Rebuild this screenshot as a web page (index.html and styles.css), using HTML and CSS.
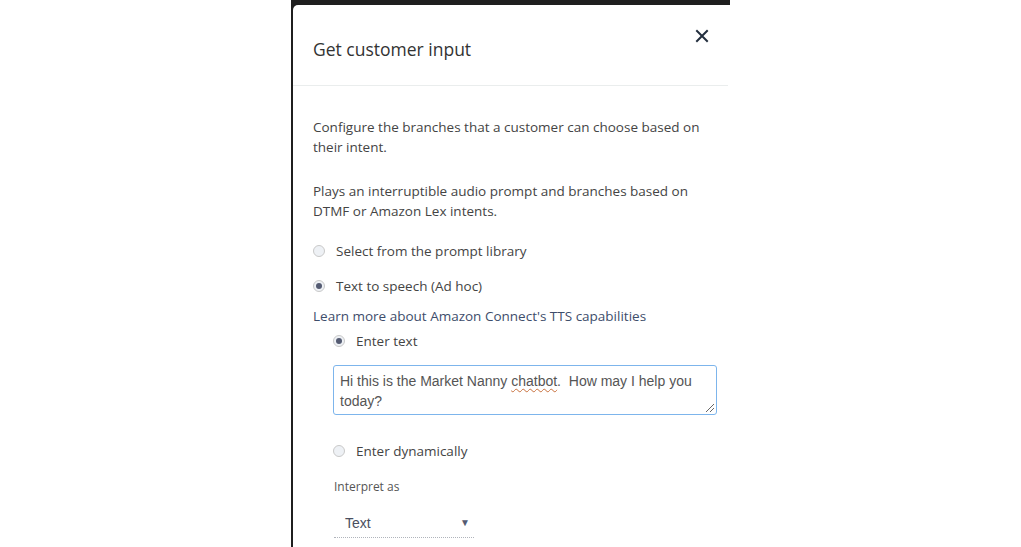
FILE: index.html
```html
<!DOCTYPE html>
<html>
<head>
<meta charset="utf-8">
<link rel="stylesheet" href="styles.css">
</head>
<body>
<div class="stage">
  <div class="frame">
    <div class="panel">
      <header class="head">
        <h1 class="title">Get customer input</h1>
        <button class="close" aria-label="Close">
          <svg width="14" height="14" viewBox="0 0 14 14"><path d="M2 2 L12 12 M12 2 L2 12" stroke="#232f3e" stroke-width="2" stroke-linecap="square"/></svg>
        </button>
      </header>
      <div class="body">
        <p class="para">Configure the branches that a customer can choose based on their intent.</p>
        <p class="para last">Plays an interruptible audio prompt and branches based on DTMF or Amazon Lex intents.</p>
        <label class="radio-row"><span class="radio"></span><span>Select from the prompt library</span></label>
        <label class="radio-row"><span class="radio on"></span><span>Text to speech (Ad hoc)</span></label>
        <a class="link">Learn more about Amazon Connect's TTS capabilities</a>
        <div class="sub">
          <label class="radio-row tight"><span class="radio on"></span><span>Enter text</span></label>
          <div class="textarea">Hi this is the Market Nanny <span class="spell">chatbot</span>.&nbsp; How may I help you today?<span class="grip"></span></div>
          <label class="radio-row dyn"><span class="radio"></span><span>Enter dynamically</span></label>
          <div class="small-label">Interpret as</div>
          <div class="select"><span>Text</span><span class="caret">▼</span></div>
        </div>
      </div>
    </div>
  </div>
</div>
</body>
</html>
```
FILE: styles.css
```css
html, body {
  margin: 0;
  padding: 0;
  background: #fff;
  height: 100%;
  overflow: hidden;
}
.stage {
  display: flex;
  height: 547px;
  padding-left: 291px;
}
.frame {
  width: 439px;
  background: #1f1f1f;
  padding: 5px 0 0 2px;
  box-sizing: border-box;
  display: flex;
}
.panel {
  flex: 1;
  background: #fff;
  border-top-left-radius: 5px;
  font-family: "Open Sans", "Noto Sans", sans-serif;
  color: #444;
}
.head {
  display: flex;
  justify-content: space-between;
  align-items: flex-start;
  height: 80px;
  border-bottom: 1px solid #eaeded;
  margin-right: 2px;
}
.title {
  margin: 33px 0 0 20px;
  font-size: 17.5px;
  font-weight: 400;
  color: #333;
  line-height: 22px;
}
.close {
  border: 0;
  background: none;
  padding: 0;
  margin: 24px 19px 0 0;
  width: 14px;
  height: 14px;
  display: flex;
}
.body {
  padding: 31px 0 0 20px;
  font-size: 13.5px;
  line-height: 20px;
}
.para {
  margin: 0 0 24px 0;
  width: 392px;
}
.para.last { margin-bottom: 20px; }
.radio-row {
  display: flex;
  align-items: center;
  gap: 11px;
  height: 20px;
  margin-bottom: 15px;
  font-size: 13.5px;
  color: #444;
}
.radio-row.tight { margin-bottom: 14px; }
.radio {
  width: 10px;
  height: 10px;
  border-radius: 50%;
  border: 1px solid #c9c9c9;
  background: #eef1f5;
  box-sizing: content-box;
  display: flex;
  align-items: center;
  justify-content: center;
}
.radio.on::after {
  content: "";
  width: 6px;
  height: 6px;
  border-radius: 50%;
  background: #545b72;
}
.link {
  display: block;
  color: #3e4d6b;
  margin-top: -5px;
  margin-bottom: 5px;
}
.sub {
  padding-left: 20px;
}
.textarea {
  position: relative;
  width: 384px;
  height: 50px;
  box-sizing: border-box;
  border: 1px solid #7db5ec;
  border-radius: 3px;
  padding: 5px 6px;
  font-family: "Liberation Sans", Arial, sans-serif;
  font-size: 14px;
  line-height: 20px;
  color: #555;
  margin-bottom: 26px;
}
.spell {
  text-decoration: underline wavy #c8703c;
  text-decoration-thickness: 1px;
  text-underline-offset: 2px;
}
.grip {
  position: absolute;
  right: 2px;
  bottom: 2px;
  width: 8px;
  height: 8px;
  background: linear-gradient(135deg, transparent 45%, #666 45%, #666 55%, transparent 55%, transparent 70%, #666 70%, #666 80%, transparent 80%);
}
.radio-row.dyn { margin-bottom: 16px; }
.small-label {
  font-size: 12px;
  color: #555;
  margin-left: 1px;
  margin-bottom: 16px;
}
.select {
  width: 140px;
  display: flex;
  justify-content: space-between;
  align-items: center;
  box-sizing: border-box;
  padding: 0 4px 4px 11px;
  border-bottom: 1px dotted #b0b4bb;
  font-family: "Liberation Sans", Arial, sans-serif;
  font-size: 14px;
  color: #4a4f60;
  margin-left: 1px;
}
.caret {
  font-size: 10px;
  color: #545b72;
}
```
